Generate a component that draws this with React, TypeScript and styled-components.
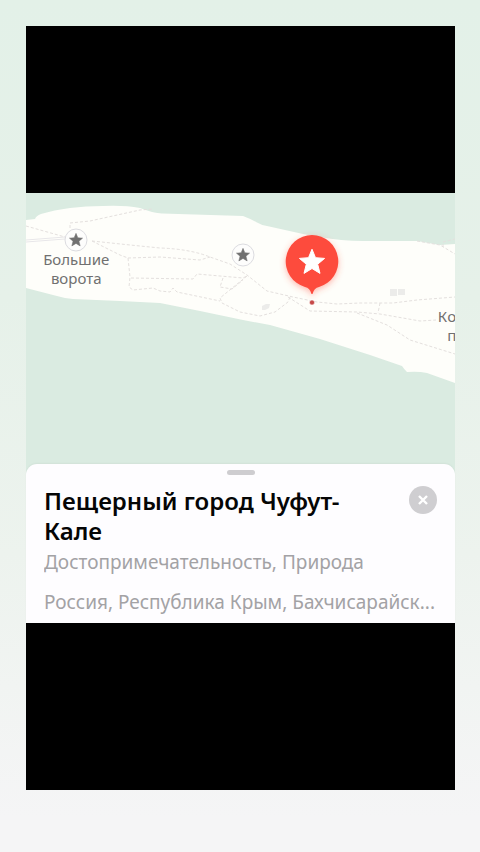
import React from "react";
import styled, { createGlobalStyle } from "styled-components";

const GlobalStyle = createGlobalStyle`
  * { box-sizing: border-box; }
  body {
    margin: 0;
    font-family: "Noto Sans", "Open Sans", sans-serif;
    background: #f5f5f6;
  }
`;

const Page = styled.main`
  display: flex;
  min-height: 100vh;
  padding: 26px 25px 62px 26px;
  background: linear-gradient(180deg, #e3f1e8 0%, #e6f1e9 35%, #edf3ee 65%, #f5f5f6 96%);
`;

const Frame = styled.div`
  flex: 1;
  min-width: 0;
  display: flex;
  flex-direction: column;
  justify-content: center;
  background: #000;
`;

const MapArea = styled.section`
  position: relative;
  overflow: hidden;
  background: #daebe1;
`;

const MapDrawing = styled.svg`
  display: block;
  width: 100%;
  height: auto;
`;

const MapLabel = styled.span<{ $left: number; $top: number; $align: "center" | "right" }>`
  position: absolute;
  left: ${(p) => p.$left}%;
  top: ${(p) => p.$top}%;
  font-size: 15px;
  line-height: 19px;
  text-align: ${(p) => p.$align};
  white-space: pre;
  color: #707070;
`;

const Sheet = styled.section`
  position: relative;
  display: flex;
  flex-direction: column;
  margin-top: -13px;
  padding: 6px 18px 7px;
  border-radius: 11px 11px 0 0;
  background: #fefdff;
  box-shadow: 0 -1px 2px rgba(0, 0, 0, 0.04);
`;

const Handle = styled.div`
  align-self: center;
  width: 28px;
  height: 5px;
  border-radius: 3px;
  background: #cecdd0;
`;

const Header = styled.header`
  display: flex;
  justify-content: space-between;
  align-items: flex-start;
  padding-top: 11px;
`;

const Title = styled.h1`
  max-width: 320px;
  margin: 0;
  font-size: 24px;
  font-weight: 600;
  line-height: 30px;
  color: #050505;
`;

const CloseButton = styled.button`
  display: flex;
  flex: none;
  align-items: center;
  justify-content: center;
  width: 28px;
  height: 28px;
  padding: 0;
  border: 0;
  border-radius: 50%;
  background: #cfced1;
  cursor: pointer;
`;

const Detail = styled.p<{ $gap: number }>`
  margin: ${(p) => p.$gap}px 0 0;
  overflow: hidden;
  font-size: 19px;
  line-height: 28px;
  white-space: nowrap;
  text-overflow: ellipsis;
  color: #a3a2a5;
`;

const STAR =
  "M0 -12.8 L3.5 -4.3 L12.6 -3.6 L5.7 2.2 L8 11.4 L0 6.5 L-8 11.4 L-5.7 2.2 L-12.6 -3.6 L-3.5 -4.3 Z";

const trails = [
  "M44 35V30L64 28L114 17L127 16",
  "M0 33L39 44",
  "M66 48L94 62L102 65L104 84L103 94L107 97L127 95L134 98L144 99L147 95L151 99L194 108",
  "M66 48L104 52L134 55Q164 56 184 64L204 71L221 82L241 98L267 104L291 109L311 111L334 110L367 110L391 107L429 104",
  "M102 65L134 64L174 67L184 64",
  "M105 85L167 86L171 81L217 85L221 83",
  "M197 85L194 94L206 96L217 87",
  "M221 83L194 105L196 110L214 119L234 123L249 119L262 109L264 104",
  "M262 104L284 118L331 119L354 121L394 128L410 127",
  "M331 120L361 132L384 147L429 161",
  "M354 110L352 120",
  "M391 48L414 52L429 61",
  "M417 54V49L429 46",
];

const Landmark = ({ x, y }: { x: number; y: number }) => (
  <g transform={`translate(${x} ${y})`}>
    <circle r="11" fill="#fdfdfc" stroke="#dcdce0" />
    <path d={STAR} transform="scale(.52)" fill="#707070" stroke="#707070" />
  </g>
);

export default function App() {
  return (
    <>
      <GlobalStyle />
      <Page>
        <Frame>
          <MapArea aria-label="Карта">
            <MapDrawing viewBox="0 0 429 284" aria-hidden="true">
              <defs>
                <filter id="glow" x="-30%" y="-30%" width="160%" height="160%">
                  <feDropShadow dx="0" dy="2" stdDeviation="3" floodColor="#ff4a3a" floodOpacity=".4" />
                </filter>
              </defs>
              <path
                fill="#fefefa"
                d="M0 27L9 26Q10 23 15 21Q28 17 44 15Q60 13 77 13Q98 12 114 15Q127 20 136 20.500L217 23Q225 26 230 29Q235 32 241 33L277 41L294 44Q315 48 337 48L391 48L414 52L429 51V190L401 180Q392 178 381 179Q378 176 376 173L344 162L294 146L244 132L217 127L174 118L134 110L94 108L47 106Q37 105 27 102L0 95Z"
              />
              <path d="M0 47L39 44M0 49L39 46" stroke="#e8e7e9" fill="none" />
              {trails.map((d) => (
                <path key={d} d={d} fill="none" stroke="#e4e0de" strokeDasharray="3 2" />
              ))}
              <path d="M364 96h7v7h-7zM372 96h7v6h-7zM236 113l4-2h4l-1 4-4 2h-3z" fill="#ececea" />
              <Landmark x={50} y={47} />
              <Landmark x={217} y={62} />
              <path
                filter="url(#glow)"
                fill="#fd4b3d"
                d="M286 42A26.500 26.500 0 0 1 293 94Q288 95 286.500 101H285.500Q284 95 279 94A26.500 26.500 0 0 1 286 42Z"
              />
              <path
                d={STAR}
                transform="translate(286 69)"
                fill="#fff"
                stroke="#fff"
                strokeLinejoin="round"
              />
              <circle cx="286" cy="109.500" r="2.500" fill="#c64a48" stroke="#fff" strokeWidth=".5" />
            </MapDrawing>
            <MapLabel $left={4} $top={20} $align="center">{"Большие\nворота"}</MapLabel>
            <MapLabel $left={96} $top={40} $align="right">{"Кo\nп"}</MapLabel>
          </MapArea>
          <Sheet>
            <Handle />
            <Header>
              <Title>Пещерный город Чуфут-Кале</Title>
              <CloseButton type="button" aria-label="Закрыть">
                <svg width="12" height="12" viewBox="0 0 12 12" fill="none" stroke="#fff" strokeWidth="2.400">
                  <path d="M2 2l8 8M10 2l-8 8" />
                </svg>
              </CloseButton>
            </Header>
            <Detail $gap={2}>Достопримечательность, Природа</Detail>
            <Detail $gap={12}>Россия, Республика Крым, Бахчисарайск...</Detail>
          </Sheet>
        </Frame>
      </Page>
    </>
  );
}
